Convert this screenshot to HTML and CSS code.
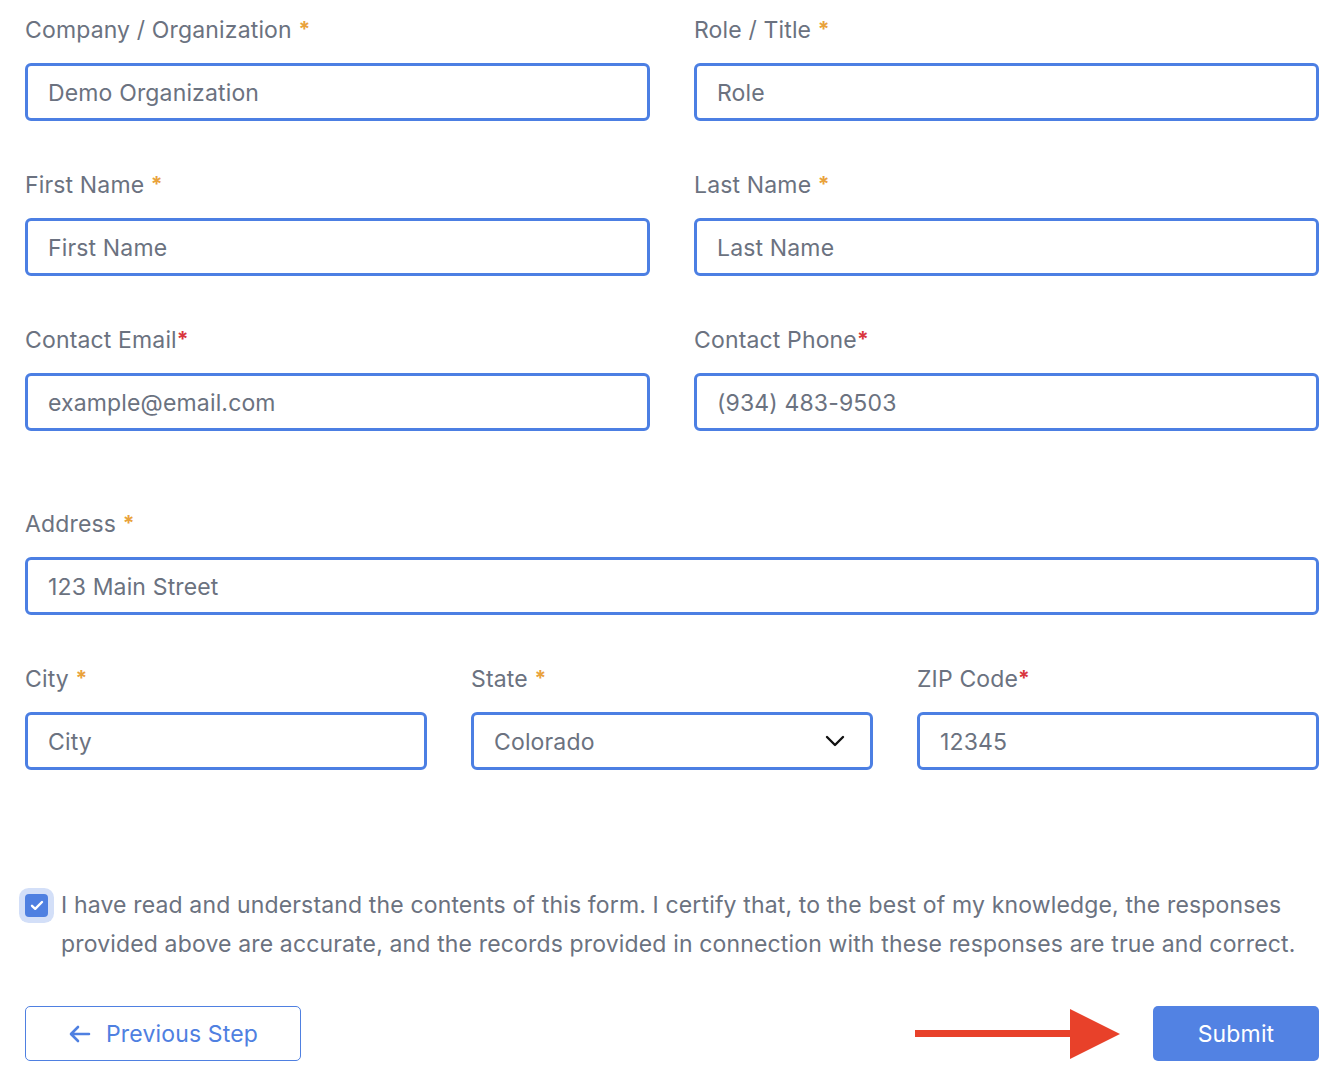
FILE: index.html
```html
<!DOCTYPE html>
<html lang="en">
<head>
  <meta charset="UTF-8">
  <meta name="viewport" content="width=device-width, initial-scale=1.0">
  <title>Contact Details</title>
  <link rel="stylesheet" href="styles.css">
</head>
<body>
  <form class="form" onsubmit="return false">
    <div class="row row-2">
      <div class="field">
        <label class="field-label">Company / Organization <span class="req req-soft">*</span></label>
        <input class="field-input" type="text" value="Demo Organization">
      </div>
      <div class="field">
        <label class="field-label">Role / Title <span class="req req-soft">*</span></label>
        <input class="field-input" type="text" placeholder="Role">
      </div>
    </div>

    <div class="row row-2">
      <div class="field">
        <label class="field-label">First Name <span class="req req-soft">*</span></label>
        <input class="field-input" type="text" placeholder="First Name">
      </div>
      <div class="field">
        <label class="field-label">Last Name <span class="req req-soft">*</span></label>
        <input class="field-input" type="text" placeholder="Last Name">
      </div>
    </div>

    <div class="row row-2">
      <div class="field">
        <label class="field-label">Contact Email<span class="req req-hard">*</span></label>
        <input class="field-input" type="email" placeholder="example@email.com">
      </div>
      <div class="field">
        <label class="field-label">Contact Phone<span class="req req-hard">*</span></label>
        <input class="field-input" type="tel" value="(934) 483-9503">
      </div>
    </div>

    <div class="row row-1 row-address">
      <div class="field">
        <label class="field-label">Address <span class="req req-soft">*</span></label>
        <input class="field-input" type="text" value="123 Main Street">
      </div>
    </div>

    <div class="row row-3">
      <div class="field">
        <label class="field-label">City <span class="req req-soft">*</span></label>
        <input class="field-input" type="text" placeholder="City">
      </div>
      <div class="field">
        <label class="field-label">State <span class="req req-soft">*</span></label>
        <div class="select-wrap">
          <select class="field-input field-select">
            <option>Colorado</option>
          </select>
          <svg class="select-chevron" width="20" height="12" viewBox="0 0 20 12" fill="none">
            <path d="M2 2l8 8 8-8" stroke="#111" stroke-width="2.4" stroke-linecap="round" stroke-linejoin="round"/>
          </svg>
        </div>
      </div>
      <div class="field">
        <label class="field-label">ZIP Code<span class="req req-hard">*</span></label>
        <input class="field-input" type="text" value="12345">
      </div>
    </div>

    <label class="certify">
      <span class="checkbox">
        <svg width="14" height="11" viewBox="0 0 14 11" fill="none">
          <path d="M2 5.8l3.2 3L12 2" stroke="#fff" stroke-width="2.4" stroke-linecap="round" stroke-linejoin="round"/>
        </svg>
      </span>
      <span class="certify-text">I have read and understand the contents of this form. I certify that, to the best of my knowledge, the responses<br>provided above are accurate, and the records provided in connection with these responses are true and correct.</span>
    </label>

    <div class="actions">
      <button class="btn btn-outline" type="button">
        <svg width="24" height="20" viewBox="0 0 24 20" fill="none">
          <path d="M21 10H4M10 3L3 10l7 7" stroke="currentColor" stroke-width="2.6" stroke-linecap="round" stroke-linejoin="round"/>
        </svg>
        Previous Step
      </button>
      <div class="actions-right">
        <svg class="pointer-arrow" width="206" height="52" viewBox="0 0 206 52">
          <rect x="0" y="22" width="160" height="7" fill="#e8412a"/>
          <polygon points="155,1 205,26 155,51" fill="#e8412a"/>
        </svg>
        <button class="btn btn-primary" type="submit">Submit</button>
      </div>
    </div>
  </form>
</body>
</html>
```

FILE: styles.css
```css
* {
  margin: 0;
  padding: 0;
  box-sizing: border-box;
}

body {
  font-family: Inter, "Noto Sans", sans-serif;
  background: #fff;
  color: #6b7280;
  letter-spacing: 0.15px;
}

.form {
  padding: 14px 25px 0 25px;
}

.row {
  display: grid;
  gap: 44px;
  margin-bottom: 48px;
}

.row-1 { grid-template-columns: 1fr; }
.row-2 { grid-template-columns: 1fr 1fr; }
.row-3 { grid-template-columns: 1fr 1fr 1fr; }

.row-address {
  margin-top: 77px;
}

.field {
  display: flex;
  flex-direction: column;
}

.field-label {
  font-size: 23px;
  line-height: 32px;
  height: 32px;
  color: #6b7280;
  margin-bottom: 17px;
}

.req {
  font-size: 21px;
  font-weight: 700;
  line-height: 0;
  vertical-align: 1px;
}

.req-soft { color: #e9a23b; }
.req-hard { color: #d9363e; }

.field-input {
  width: 100%;
  height: 58px;
  border: 3px solid #4c7fe3;
  border-radius: 6px;
  padding: 2px 20px 0;
  font-family: inherit;
  font-size: 23px;
  letter-spacing: 0.15px;
  color: #6b7280;
  background: #fff;
  outline: none;
}

.field-input::placeholder {
  color: #6b7280;
  opacity: 1;
}

.select-wrap {
  position: relative;
}

.field-select {
  appearance: none;
  -webkit-appearance: none;
}

.select-chevron {
  position: absolute;
  right: 28px;
  top: 23px;
  pointer-events: none;
}

.certify {
  display: flex;
  align-items: flex-start;
  gap: 9px;
  margin-top: 116px;
  margin-left: -7px;
}

.checkbox {
  flex: none;
  width: 23px;
  height: 23px;
  margin-top: 8px;
  margin-left: 7px;
  border-radius: 4px;
  background: #4f80e1;
  box-shadow: 0 0 0 6px #d3dff8;
  display: flex;
  align-items: center;
  justify-content: center;
}

.certify-text {
  font-size: 23px;
  line-height: 39px;
  color: #6b7280;
  margin-left: 4px;
}

.actions {
  display: flex;
  justify-content: space-between;
  align-items: center;
  margin-top: 42px;
}

.actions-right {
  display: flex;
  align-items: center;
  gap: 32px;
}

.btn {
  height: 55px;
  border-radius: 5px;
  font-family: inherit;
  font-size: 23px;
  letter-spacing: 0.15px;
  display: flex;
  align-items: center;
  justify-content: center;
  cursor: pointer;
}

.btn-outline {
  width: 276px;
  gap: 14px;
  background: #fff;
  border: 1px solid #4f80e1;
  color: #4f80e1;
}

.btn-primary {
  width: 166px;
  background: #5282e3;
  border: none;
  color: #fff;
}
```
